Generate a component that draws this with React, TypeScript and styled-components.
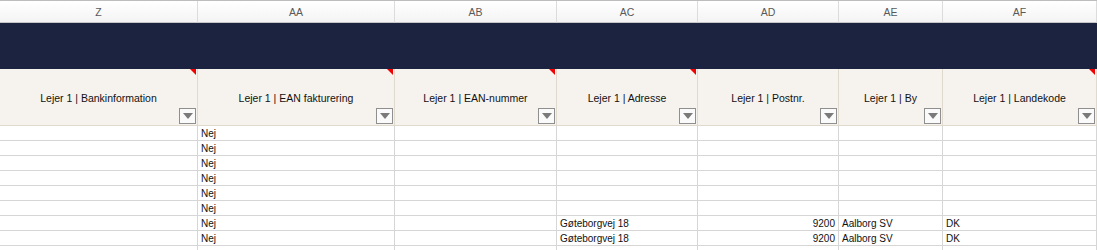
import React from "react";
import styled, { createGlobalStyle } from "styled-components";

interface IColumn {
  letter: string;
  width: number;
  title: string;
  comment: boolean;
}

const columns: IColumn[] = [
  { letter: "Z", width: 198, title: "Lejer 1 | Bankinformation", comment: true },
  { letter: "AA", width: 197, title: "Lejer 1 | EAN fakturering", comment: true },
  { letter: "AB", width: 162, title: "Lejer 1 | EAN-nummer", comment: true },
  { letter: "AC", width: 141, title: "Lejer 1 | Adresse", comment: true },
  { letter: "AD", width: 141, title: "Lejer 1 | Postnr.", comment: false },
  { letter: "AE", width: 104, title: "Lejer 1 | By", comment: false },
  { letter: "AF", width: 154, title: "Lejer 1 | Landekode", comment: true },
];

const rows: string[][] = [
  ["", "Nej", "", "", "", "", ""],
  ["", "Nej", "", "", "", "", ""],
  ["", "Nej", "", "", "", "", ""],
  ["", "Nej", "", "", "", "", ""],
  ["", "Nej", "", "", "", "", ""],
  ["", "Nej", "", "", "", "", ""],
  ["", "Nej", "", "Gøteborgvej 18", "9200", "Aalborg SV", "DK"],
  ["", "Nej", "", "Gøteborgvej 18", "9200", "Aalborg SV", "DK"],
  ["", "", "", "", "", "", ""],
];

const GlobalStyle = createGlobalStyle`
  body {
    margin: 0;
    background: #ffffff;
    font-family: "Liberation Sans", Arial, sans-serif;
    overflow: hidden;
  }
`;

const App: React.FC = () => {
  return (
    <>
      <GlobalStyle />
      <Sheet>
        <Row>
          {columns.map((c) => (
            <LetterCell key={c.letter} style={{ width: c.width }}>
              {c.letter}
            </LetterCell>
          ))}
        </Row>
        <Banner />
        <Row>
          {columns.map((c) => (
            <HeaderCell key={c.letter} style={{ width: c.width }}>
              {c.comment && <CommentMark />}
              {c.title}
              <FilterButton>
                <svg width="10" height="6" viewBox="0 0 10 6">
                  <path d="M0 0 H10 L5 6 Z" fill="#7a7a7a" />
                </svg>
              </FilterButton>
            </HeaderCell>
          ))}
        </Row>
        {rows.map((r, i) => (
          <Row key={i}>
            {r.map((v, j) => (
              <DataCell key={j} style={{ width: columns[j].width }} $numeric={j === 4}>
                {v}
              </DataCell>
            ))}
          </Row>
        ))}
      </Sheet>
    </>
  );
};

const Sheet = styled.div`
  width: 1097px;
  overflow: hidden;
  border-top: 1px solid #bdbdbd;
`;

const Row = styled.div`
  display: flex;
  flex-wrap: nowrap;
`;

const LetterCell = styled.div`
  flex: none;
  box-sizing: border-box;
  height: 22px;
  display: flex;
  align-items: center;
  justify-content: center;
  font-size: 10.5px;
  color: #595959;
  background: linear-gradient(#ffffff, #f4f4f4);
  border-right: 1px solid #dcdcdc;
  border-bottom: 1px solid #c6c6c6;
`;

const Banner = styled.div`
  height: 46px;
  background: #1b2340;
`;

const HeaderCell = styled.div`
  flex: none;
  position: relative;
  box-sizing: border-box;
  height: 57px;
  display: flex;
  align-items: center;
  justify-content: center;
  padding-top: 2px;
  font-size: 10.5px;
  color: #111111;
  background: #f6f3ee;
  border-right: 1px solid #e0d9cd;
  border-bottom: 1px solid #e0d9cd;
`;

const CommentMark = styled.span`
  position: absolute;
  top: 0;
  right: 1px;
  width: 0;
  height: 0;
  border-top: 6px solid #f00000;
  border-left: 6px solid transparent;
`;

const FilterButton = styled.span`
  position: absolute;
  right: 1px;
  bottom: 1px;
  box-sizing: border-box;
  width: 17px;
  height: 16px;
  display: flex;
  align-items: center;
  justify-content: center;
  background: #fafafa;
  border: 1px solid #8f8f8f;
`;

const DataCell = styled.div<{ $numeric?: boolean }>`
  flex: none;
  box-sizing: border-box;
  height: 15px;
  padding: 0 3px;
  display: flex;
  align-items: center;
  justify-content: ${(p) => (p.$numeric ? "flex-end" : "flex-start")};
  font-size: 10px;
  color: #111111;
  white-space: nowrap;
  border-right: 1px solid #d6d6d6;
  border-bottom: 1px solid #d6d6d6;
`;

export default App;
